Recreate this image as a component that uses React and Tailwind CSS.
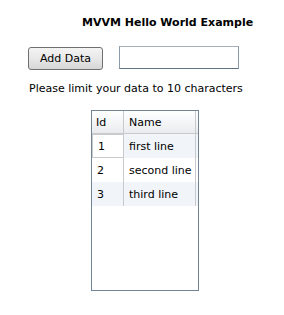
export default function App() {
  const rows = [
    { id: 1, name: 'first line' },
    { id: 2, name: 'second line' },
    { id: 3, name: 'third line' },
  ];

  return (
    <div className="w-[284px] h-[315px] bg-white text-[11px] leading-none text-black font-['DejaVu_Sans',sans-serif]">
      <div className="pt-[17px] pl-[82px] font-bold">MVVM Hello World Example</div>

      <div className="flex items-start gap-[16px] pl-[28px] mt-[18px]">
        <button className="mt-[1px] w-[75px] h-[23px] rounded-[3px] border border-[#707070] bg-gradient-to-b from-[#f4f4f4] via-[#e8e8e8] to-[#d6d6d6] text-[11px] text-black">
          Add Data
        </button>
        <input
          className="w-[120px] h-[23px] border border-[#8a9aa8] border-t-[#a3aeb9] border-b-[#617584] bg-white outline-none px-1"
          type="text"
        />
      </div>

      <p className="pl-[29px] mt-[13px]">Please limit your data to 10 characters</p>

      {/* data grid */}
      <div className="ml-[91px] mt-[16px] w-[108px] h-[181px] border border-[#718597] bg-white flex flex-col">
        <div className="flex h-[23px] bg-gradient-to-b from-[#ffffff] to-[#e9ecef] border-b border-[#c9cacb]">
          <div className="w-[32px] flex items-center pl-[4px] border-r border-[#c9cacb]">Id</div>
          <div className="w-[72px] flex items-center pl-[5px] border-r border-[#c9cacb]">Name</div>
        </div>
        {rows.map((r, i) => (
          <div key={r.id} className={`flex h-[24px] ${i % 2 === 1 ? 'bg-white' : 'bg-[#f1f4f8]'}`}>
            <div
              className={`w-[32px] flex items-center pl-[5px] border-r border-[#c9cacb] ${
                i === 0 ? 'border border-[#7fc3da] bg-white' : ''
              }`}
            >
              {r.id}
            </div>
            <div className="w-[72px] flex items-center pl-[5px] border-r border-[#c9cacb]">{r.name}</div>
          </div>
        ))}
      </div>
    </div>
  );
}
